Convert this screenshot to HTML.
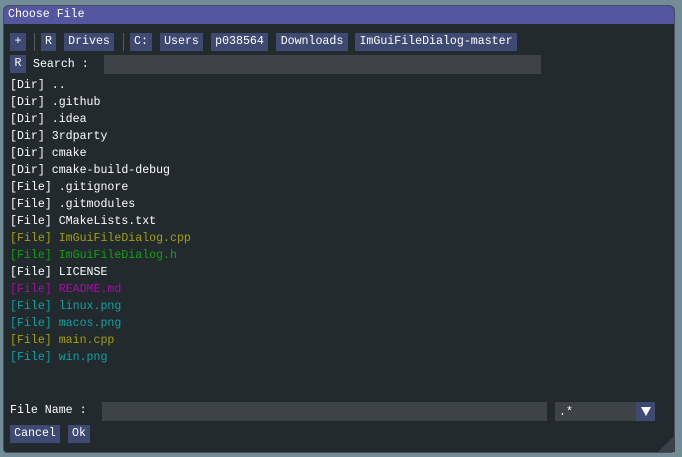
<!DOCTYPE html>
<html><head><meta charset="utf-8"><style>
*{margin:0;padding:0;box-sizing:border-box}
body{width:682px;height:457px;background:#728d97;position:relative;overflow:hidden;font-family:"Liberation Mono","DejaVu Sans Mono",monospace;font-size:11.6px;color:#fff}
.win{position:absolute;left:3px;top:5px;width:672px;height:448px;background:#232a2e;border-radius:6px 6px 4px 4px;border:1px solid #4a4e55;overflow:hidden}
.title{position:absolute;left:0;top:0;width:100%;height:18px;background:#5456a0;padding-left:4px;line-height:18px;color:#fff}
.a{position:absolute;white-space:pre;line-height:17px}
.b{position:absolute;background:#3e4a72;height:18px;line-height:18px;text-align:center;color:#fff}
.in{position:absolute;background:#3e4346;height:19px}
.sep{position:absolute;width:1px;height:18px;background:#555a60}
.y{color:#a0a010}.g{color:#10a010}.m{color:#a010a0}.c{color:#10a0a0}
</style></head><body>
<div class="win">
<div class="title">Choose File</div>
</div>
<div class="b" style="left:10px;top:33px;width:16px">+</div>
<div class="sep" style="left:34px;top:33px"></div>
<div class="b" style="left:41px;top:33px;width:15px">R</div>
<div class="b" style="left:64px;top:33px;width:50px">Drives</div>
<div class="sep" style="left:123px;top:33px"></div>
<div class="b" style="left:130px;top:33px;width:22px">C:</div>
<div class="b" style="left:160px;top:33px;width:43px">Users</div>
<div class="b" style="left:211px;top:33px;width:57px">p038564</div>
<div class="b" style="left:276px;top:33px;width:72px">Downloads</div>
<div class="b" style="left:355px;top:33px;width:162px">ImGuiFileDialog-master</div>
<div class="b" style="left:10px;top:55px;width:16px">R</div>
<div class="a" style="left:33px;top:56px">Search :</div>
<div class="in" style="left:104px;top:55px;width:437px"></div>
<div class="a" style="left:10px;top:77px">[Dir] ..</div>
<div class="a" style="left:10px;top:94px">[Dir] .github</div>
<div class="a" style="left:10px;top:111px">[Dir] .idea</div>
<div class="a" style="left:10px;top:128px">[Dir] 3rdparty</div>
<div class="a" style="left:10px;top:145px">[Dir] cmake</div>
<div class="a" style="left:10px;top:162px">[Dir] cmake-build-debug</div>
<div class="a" style="left:10px;top:179px">[File] .gitignore</div>
<div class="a" style="left:10px;top:196px">[File] .gitmodules</div>
<div class="a" style="left:10px;top:213px">[File] CMakeLists.txt</div>
<div class="a y" style="left:10px;top:230px">[File] ImGuiFileDialog.cpp</div>
<div class="a g" style="left:10px;top:247px">[File] ImGuiFileDialog.h</div>
<div class="a" style="left:10px;top:264px">[File] LICENSE</div>
<div class="a m" style="left:10px;top:281px">[File] README.md</div>
<div class="a c" style="left:10px;top:298px">[File] linux.png</div>
<div class="a c" style="left:10px;top:315px">[File] macos.png</div>
<div class="a y" style="left:10px;top:332px">[File] main.cpp</div>
<div class="a c" style="left:10px;top:349px">[File] win.png</div>
<div class="a" style="left:10px;top:402px">File Name :</div>
<div class="in" style="left:102px;top:402px;width:445px"></div>
<div class="in" style="left:555px;top:402px;width:81px"><span class="a" style="left:4px;top:2px">.*</span></div>
<div class="b" style="left:636px;top:402px;width:19px;height:19px;line-height:19px"><svg width="10" height="10" viewBox="0 0 10 10" style="margin-top:4px"><path d="M0 1H10L5 10Z" fill="#fff"/></svg></div>
<div class="b" style="left:10px;top:425px;width:50px">Cancel</div>
<div class="b" style="left:68px;top:425px;width:22px">Ok</div>
<svg style="position:absolute;left:658px;top:435px" width="17" height="17"><path d="M17 0V17H0Z" fill="#3c4148"/></svg>
</body></html>
